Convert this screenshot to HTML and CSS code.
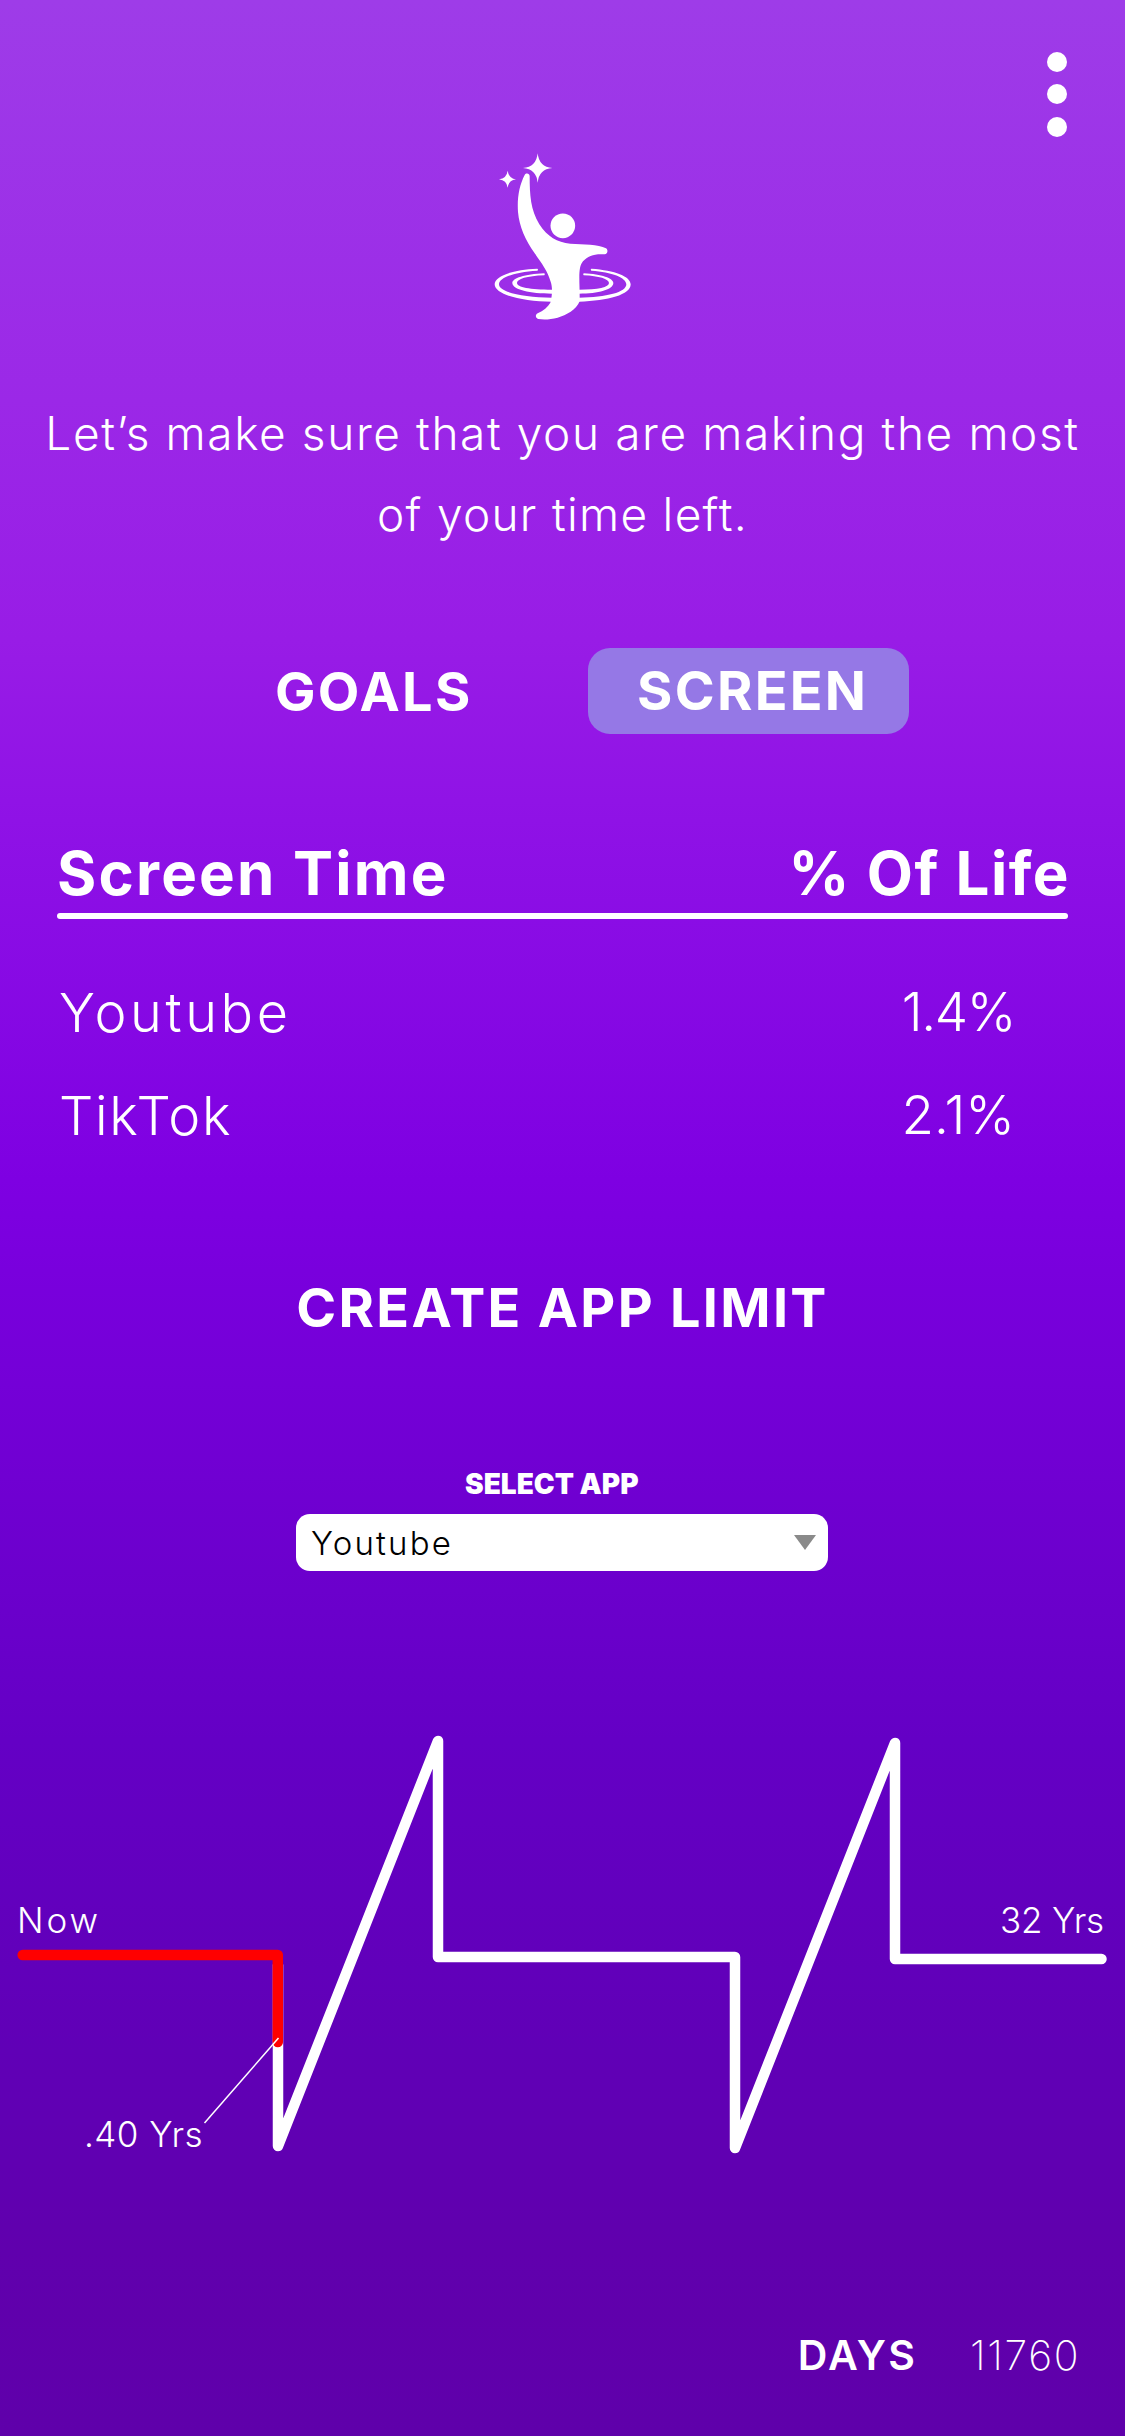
FILE: index.html
```html
<!DOCTYPE html>
<html lang="en">
<head>
<meta charset="utf-8">
<title>Screen Time</title>
<link rel="stylesheet" href="styles.css">
</head>
<body>
<main class="screen">
  <header class="topbar">
    <svg class="menu" viewBox="0 0 20 85" aria-label="Menu"><circle cx="10" cy="10" r="10"/><circle cx="10" cy="42" r="10"/><circle cx="10" cy="75" r="10"/></svg>
  </header>
  <svg class="logo" viewBox="0 0 510 570" aria-hidden="true">
    <path d="M173 40Q177 81 217 84Q177 87 173 128Q169 87 129 84Q169 81 173 40Z"/>
    <path d="M83 92Q86 115 108 118Q86 121 83 143Q80 121 57 118Q80 115 83 92Z"/>
    <circle cx="248.500" cy="257.500" r="37"/>
    <path d="M172 386C95 389 44 409 44 433C44 464 126 485 216 485V473C130 472 57 457 57 433C57 413 103 396 172 392Q176 389 172 386Z"/>
    <path d="M334 386C405 391 452 409 452 433C452 464 385 483 297 485V473C380 472 439 457 439 433C439 413 396 396 334 392Q330 389 334 386Z"/>
    <path d="M193 400C133 403 97 415 97 429C97 449 150 461 216 461V449C150 449 111 442 111 429C111 417 140 408 193 406Q196 403 193 400Z"/>
    <path d="M311 400C365 403 400 415 400 429C400 449 355 461 297 461V449C355 449 387 442 387 429C387 417 357 408 311 406Q308 403 311 400Z"/>
    <path d="M134 105C138 98 149 100 149 109C149 165 152 210 178 253C203 291 231 307 271 311C311 314 354 312 378 325C386 331 382 342 374 343C343 341 324 347 309 364C292 384 300 425 299 484C289 509 259 526 233 533C211 539 190 539 175 537C166 534 165 524 173 520C190 512 204 501 211 488C217 466 218 442 212 425C203 394 184 368 164 340C136 299 118 261 114 216C111 174 118 136 134 105Z"/>
  </svg>
  <p class="intro"><span class="intro-line">Let’s make sure that you are making the most</span><span class="intro-line intro-end">of your time left.</span></p>
  <nav class="tabs">
    <span class="tab">GOALS</span>
    <span class="tab tab-active">SCREEN</span>
  </nav>
  <section class="usage">
    <div class="usage-head"><span>Screen Time</span><span class="share">% Of Life</span></div>
    <div class="rule"></div>
    <div class="rows">
      <div class="row"><span class="app">Youtube</span><span class="value value-a">1.4%</span></div>
      <div class="row"><span class="app app-b">TikTok</span><span class="value">2.1%</span></div>
    </div>
  </section>
  <h2 class="limit-title">CREATE APP LIMIT</h2>
  <section class="picker">
    <div class="picker-label">SELECT APP</div>
    <div class="select"><span>Youtube</span><svg class="caret" viewBox="0 0 22 15"><path d="M0 0H22L11 15Z"/></svg></div>
  </section>
  <svg class="timeline" viewBox="0 1700 1125 500">
    <path class="life" d="M278 1965V2146L438 1741V1957H735V2148L895 1743V1959H1101.500"/>
    <path class="used" d="M22.700 1955H277.800V2042"/>
    <path class="leader" d="M204.500 2123L278.500 2038"/>
    <text class="label" x="17" y="1932.500" letter-spacing="2.900">Now</text>
    <text class="label" x="84" y="2147" letter-spacing=".45">.40 Yrs</text>
    <text class="label" x="1000" y="1932.500" letter-spacing="-.2">32 Yrs</text>
  </svg>
  <footer class="footer"><span class="days">DAYS</span><span class="count">11760</span></footer>
</main>
</body>
</html>
```
FILE: styles.css
```css
* { box-sizing: border-box; }
body { margin: 0; }
.screen {
  width: 1125px;
  height: 2436px;
  display: flex;
  flex-direction: column;
  overflow: hidden;
  color: #fff;
  font-family: Inter, "Open Sans", sans-serif;
  background: linear-gradient(#9e3ce8 0, #9b28e7 400px, #981ce6 640px, #8f12e6 820px, #7e00e2 1180px, #7900dd 1270px, #6b00cc 1590px, #6400c5 1740px, #6000b6 2050px, #6000ad 2250px, #5f00aa 2436px);
}
.topbar { height: 140px; display: flex; justify-content: flex-end; padding: 52px 58px 0 0; }
.menu { width: 20px; height: 85px; fill: #fff; }
.logo { width: 170px; height: 190px; margin-left: 480px; fill: #fff; }
.intro { margin: 63px 0 0; font-size: 46px; line-height: 81px; font-weight: 300; letter-spacing: 1.6px; text-align: center; white-space: nowrap; }
.intro-line { display: block; }
.intro-end { letter-spacing: 1.3px; }
.tabs { display: flex; align-items: center; height: 86px; margin-top: 93px; padding-left: 275px; font-size: 54px; font-weight: 700; letter-spacing: 2.3px; }
.tab { width: 313px; }
.tab-active { width: 321px; height: 86px; line-height: 86px; padding-left: 49px; border-radius: 22px; background: #9578e6; }
.usage { margin: 103px 57px 0; }
.usage-head { display: flex; justify-content: space-between; height: 76px; line-height: 72px; font-size: 60px; font-weight: 700; letter-spacing: 2.2px; }
.share { letter-spacing: 1.5px; margin-right: -2px; }
.rule { height: 6px; border-radius: 3px; background: #fff; }
.rows { padding: 42px 53px 0 2px; }
.row { display: flex; justify-content: space-between; line-height: 103px; font-size: 54px; font-weight: 300; letter-spacing: 3.6px; }
.app-b { letter-spacing: 1.7px; }
.value { font-size: 53px; letter-spacing: 0; }
.value-a { letter-spacing: -1.4px; }
.limit-title { margin: 111px 0 0; line-height: 60px; font-size: 54px; font-weight: 700; letter-spacing: 2.3px; text-align: center; }
.picker { width: 532px; margin: 131px 0 0 296px; }
.picker-label { padding-left: 169px; line-height: 30px; font-size: 28px; font-weight: 900; }
.select { display: flex; align-items: center; justify-content: space-between; height: 57px; margin-top: 15px; padding: 0 12px 0 15px; border-radius: 14px; background: #fff; color: #000; font-size: 33px; font-weight: 300; letter-spacing: 2.2px; }
.caret { width: 22px; height: 15px; fill: #8a8a8a; }
.timeline { width: 1125px; height: 500px; margin-top: 129px; }
.timeline path { fill: none; stroke-linecap: round; stroke-linejoin: round; }
.timeline .life { stroke: #fff; stroke-width: 10.5px; }
.timeline .used { stroke: #f00; stroke-width: 10.5px; }
.timeline .leader { stroke: #fff; stroke-width: 1.5px; stroke-linecap: butt; }
.label { fill: #fff; font-size: 35px; font-weight: 300; }
.footer { display: flex; justify-content: flex-end; gap: 53px; margin-top: 130px; padding-right: 45px; line-height: 50px; font-size: 41px; }
.days { font-weight: 600; letter-spacing: 2.2px; }
.count { font-weight: 200; letter-spacing: 1.6px; }
```
